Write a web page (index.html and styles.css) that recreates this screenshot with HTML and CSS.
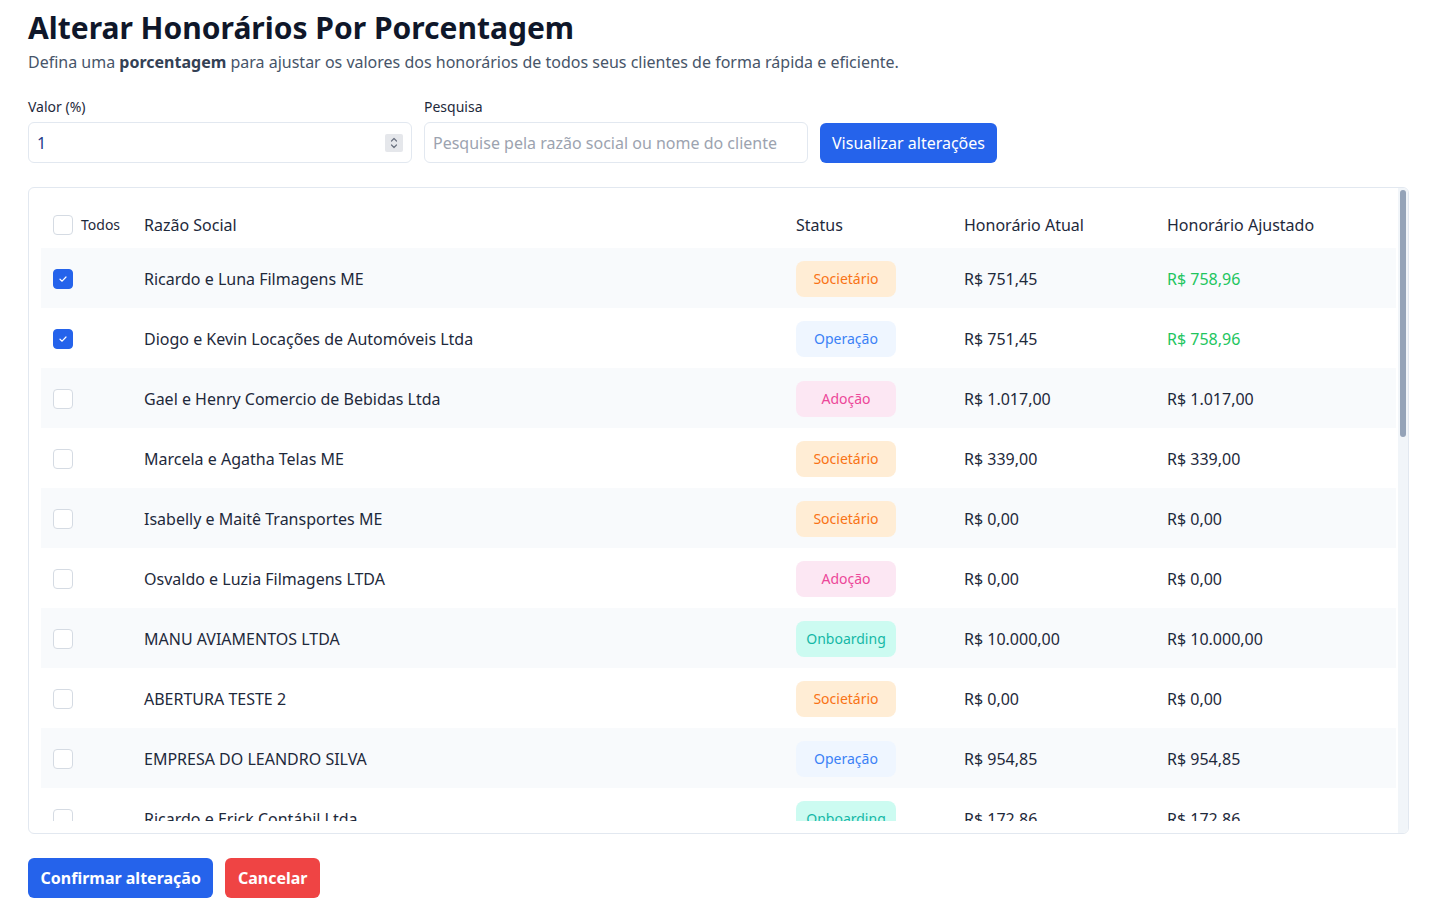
FILE: index.html
```html
<!DOCTYPE html>
<html lang="pt-BR">
<head>
<meta charset="utf-8">
<title>Alterar Honorários Por Porcentagem</title>
<link rel="stylesheet" href="styles.css">
</head>
<body>
<main class="page">
  <h1 class="title">Alterar Honorários Por Porcentagem</h1>
  <p class="subtitle">Defina uma <strong>porcentagem</strong> para ajustar os valores dos honorários de todos seus clientes de forma rápida e eficiente.</p>

  <div class="filters">
    <div class="field">
      <label class="label">Valor (%)</label>
      <div class="input-box">
        <input class="input input-value" type="text" value="1">
        <span class="spin">
          <svg width="10" height="14" viewBox="0 0 10 14" fill="none" stroke="#6b7280" stroke-width="1.2" stroke-linecap="round" stroke-linejoin="round"><path d="M2.5 5 L5 2.5 L7.5 5"/><path d="M2.5 9 L5 11.5 L7.5 9"/></svg>
        </span>
      </div>
    </div>
    <div class="field">
      <label class="label">Pesquisa</label>
      <div class="input-box">
        <input class="input" type="text" placeholder="Pesquise pela razão social ou nome do cliente">
      </div>
    </div>
    <button class="btn btn-blue btn-light">Visualizar alterações</button>
  </div>

  <div class="table-card">
    <div class="table-scroll">
    <div class="row head">
      <div class="cell cell-check"><span class="cb"></span><span class="todos">Todos</span></div>
      <div class="cell">Razão Social</div>
      <div class="cell">Status</div>
      <div class="cell">Honorário Atual</div>
      <div class="cell">Honorário Ajustado</div>
    </div>

    <div class="row">
      <div class="cell cell-check"><span class="cb cb-on"><svg width="10" height="10" viewBox="0 0 10 10" fill="none" stroke="#fff" stroke-width="1.2" stroke-linecap="round" stroke-linejoin="round"><path d="M2 5.2 L4.1 7.2 L8 3"/></svg></span></div>
      <div class="cell">Ricardo e Luna Filmagens ME</div>
      <div class="cell"><span class="badge b-soc">Societário</span></div>
      <div class="cell">R$ 751,45</div>
      <div class="cell up">R$ 758,96</div>
    </div>
    <div class="row">
      <div class="cell cell-check"><span class="cb cb-on"><svg width="10" height="10" viewBox="0 0 10 10" fill="none" stroke="#fff" stroke-width="1.2" stroke-linecap="round" stroke-linejoin="round"><path d="M2 5.2 L4.1 7.2 L8 3"/></svg></span></div>
      <div class="cell">Diogo e Kevin Locações de Automóveis Ltda</div>
      <div class="cell"><span class="badge b-op">Operação</span></div>
      <div class="cell">R$ 751,45</div>
      <div class="cell up">R$ 758,96</div>
    </div>
    <div class="row">
      <div class="cell cell-check"><span class="cb"></span></div>
      <div class="cell">Gael e Henry Comercio de Bebidas Ltda</div>
      <div class="cell"><span class="badge b-ado">Adoção</span></div>
      <div class="cell">R$ 1.017,00</div>
      <div class="cell">R$ 1.017,00</div>
    </div>
    <div class="row">
      <div class="cell cell-check"><span class="cb"></span></div>
      <div class="cell">Marcela e Agatha Telas ME</div>
      <div class="cell"><span class="badge b-soc">Societário</span></div>
      <div class="cell">R$ 339,00</div>
      <div class="cell">R$ 339,00</div>
    </div>
    <div class="row">
      <div class="cell cell-check"><span class="cb"></span></div>
      <div class="cell">Isabelly e Maitê Transportes ME</div>
      <div class="cell"><span class="badge b-soc">Societário</span></div>
      <div class="cell">R$ 0,00</div>
      <div class="cell">R$ 0,00</div>
    </div>
    <div class="row">
      <div class="cell cell-check"><span class="cb"></span></div>
      <div class="cell">Osvaldo e Luzia Filmagens LTDA</div>
      <div class="cell"><span class="badge b-ado">Adoção</span></div>
      <div class="cell">R$ 0,00</div>
      <div class="cell">R$ 0,00</div>
    </div>
    <div class="row">
      <div class="cell cell-check"><span class="cb"></span></div>
      <div class="cell">MANU AVIAMENTOS LTDA</div>
      <div class="cell"><span class="badge b-onb">Onboarding</span></div>
      <div class="cell">R$ 10.000,00</div>
      <div class="cell">R$ 10.000,00</div>
    </div>
    <div class="row">
      <div class="cell cell-check"><span class="cb"></span></div>
      <div class="cell">ABERTURA TESTE 2</div>
      <div class="cell"><span class="badge b-soc">Societário</span></div>
      <div class="cell">R$ 0,00</div>
      <div class="cell">R$ 0,00</div>
    </div>
    <div class="row">
      <div class="cell cell-check"><span class="cb"></span></div>
      <div class="cell">EMPRESA DO LEANDRO SILVA</div>
      <div class="cell"><span class="badge b-op">Operação</span></div>
      <div class="cell">R$ 954,85</div>
      <div class="cell">R$ 954,85</div>
    </div>
    <div class="row">
      <div class="cell cell-check"><span class="cb"></span></div>
      <div class="cell">Ricardo e Erick Contábil Ltda</div>
      <div class="cell"><span class="badge b-onb">Onboarding</span></div>
      <div class="cell">R$ 172,86</div>
      <div class="cell">R$ 172,86</div>
    </div>
    <div class="row">
      <div class="cell cell-check"><span class="cb"></span></div>
      <div class="cell">Bruna e Caio Padaria ME</div>
      <div class="cell"><span class="badge b-soc">Societário</span></div>
      <div class="cell">R$ 450,00</div>
      <div class="cell">R$ 450,00</div>
    </div>
    <div class="row">
      <div class="cell cell-check"><span class="cb"></span></div>
      <div class="cell">Heitor e Lívia Consultoria Ltda</div>
      <div class="cell"><span class="badge b-op">Operação</span></div>
      <div class="cell">R$ 820,00</div>
      <div class="cell">R$ 820,00</div>
    </div>
    </div>
    <div class="scrollbar"><div class="thumb"></div></div>
  </div>

  <div class="actions">
    <button class="btn btn-blue">Confirmar alteração</button>
    <button class="btn btn-red">Cancelar</button>
  </div>
</main>
</body>
</html>
```

FILE: styles.css
```css
* { box-sizing: border-box; }

html, body {
  margin: 0;
  padding: 0;
  background: #ffffff;
}

body {
  font-family: "Noto Sans", "Open Sans", sans-serif;
  color: #1e293b;
}

.page {
  padding: 10px 26px 0 28px;
}

.title {
  margin: 0;
  font-size: 30px;
  line-height: 36px;
  font-weight: 700;
  color: #0f172a;
}

.subtitle {
  margin: 4px 0 0;
  font-size: 16px;
  line-height: 24px;
  color: #475569;
}

.subtitle strong {
  color: #334155;
  font-weight: 700;
}

.filters {
  display: flex;
  align-items: flex-end;
  gap: 12px;
  margin-top: 23px;
}

.field {
  display: flex;
  flex-direction: column;
  width: 384px;
}

.label {
  font-size: 14px;
  line-height: 20px;
  color: #1e293b;
  margin-bottom: 5px;
}

.input-box {
  display: flex;
  align-items: center;
  height: 41px;
  border: 1px solid #e2e8f0;
  border-radius: 6px;
  padding: 0 8px;
  background: #fff;
}

.input {
  flex: 1;
  min-width: 0;
  border: 0;
  outline: none;
  padding: 0;
  background: transparent;
  font-family: inherit;
  font-size: 16px;
  color: #1e293b;
}

.input::placeholder {
  color: #9ca3af;
}

.input-value {
  color: #1e3a8a;
}

.spin {
  width: 18px;
  height: 18px;
  background: #e5e7eb;
  border-radius: 2px;
  display: flex;
  align-items: center;
  justify-content: center;
}

.btn {
  height: 40px;
  border: 0;
  border-radius: 6px;
  padding: 0 12.5px;
  font-family: inherit;
  font-size: 16px;
  font-weight: 700;
  color: #fff;
  cursor: pointer;
}

.btn-blue { background: #2563eb; }
.btn-red { background: #ef4444; }
.btn-light { font-weight: 400; padding: 0 12px; }

.table-card {
  margin-top: 24px;
  height: 647px;
  border: 1px solid #e2e8f0;
  border-radius: 6px;
  overflow: hidden;
  display: flex;
}

.table-scroll {
  flex: 1;
  min-width: 0;
  margin: 12px 2px 12px 12px;
  overflow: hidden;
}

.scrollbar {
  width: 10px;
  flex: none;
  background: #f1f5f9;
  padding: 2px;
}

.thumb {
  height: 247px;
  background: #94a3b8;
  border-radius: 3px;
}

.row {
  display: grid;
  grid-template-columns: 103px 652px 168px 203px 1fr;
  align-items: center;
  height: 60px;
  font-size: 16px;
  color: #1e293b;
  padding-top: 1px;
}

.row:nth-child(even) {
  background: #f8fafc;
}

.row.head {
  height: 48px;
  background: #fff;
}

.cell-check {
  display: flex;
  align-items: center;
  gap: 8px;
  padding-left: 12px;
}

.cb {
  width: 20px;
  height: 20px;
  border: 1.5px solid #d5dbe3;
  border-radius: 4px;
  background: #fff;
  display: inline-flex;
  align-items: center;
  justify-content: center;
}

.cb-on {
  background: #2563eb;
  border-color: #2563eb;
}

.todos {
  font-size: 14px;
  color: #1e293b;
}

.up {
  color: #22c55e;
}

.badge {
  display: inline-flex;
  align-items: center;
  justify-content: center;
  width: 100px;
  height: 36px;
  border-radius: 8px;
  font-size: 14px;
  padding-bottom: 1px;
}

.b-soc { background: #ffedd5; color: #f97316; }
.b-op  { background: #eff6ff; color: #3b82f6; }
.b-ado { background: #fce7f3; color: #ec4899; }
.b-onb { background: #ccfbf1; color: #14b8a6; }

.actions {
  display: flex;
  gap: 12px;
  margin-top: 24px;
}
```
